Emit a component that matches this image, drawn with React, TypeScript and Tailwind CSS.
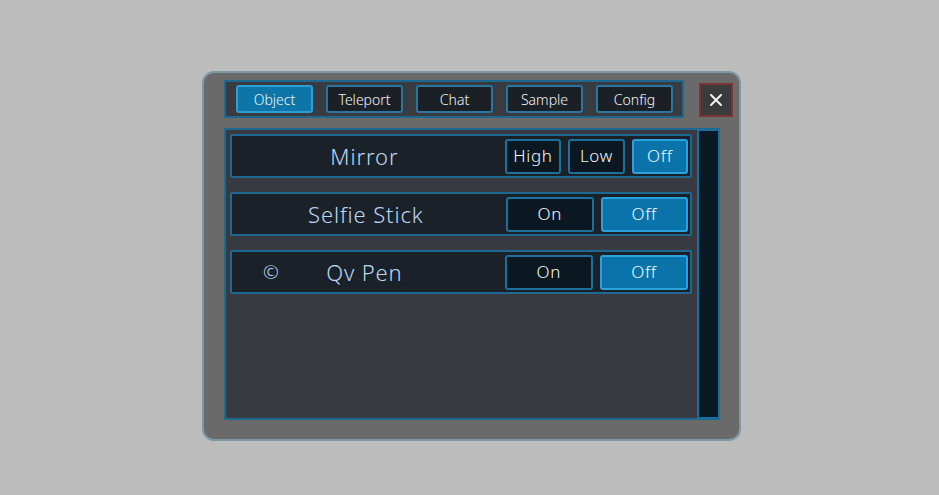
const tabs = ["Object", "Teleport", "Chat", "Sample", "Config"];

type Row = {
  label: string;
  icon?: string;
  options: string[];
  active: string;
};

const rows: Row[] = [
  { label: "Mirror", options: ["High", "Low", "Off"], active: "Off" },
  { label: "Selfie Stick", options: ["On", "Off"], active: "Off" },
  { label: "Qv Pen", icon: "©", options: ["On", "Off"], active: "Off" },
];

const font = { fontFamily: '"Noto Sans", "Open Sans", sans-serif' };

const ToggleRow = ({ row }: { row: Row }) => (
  <div className="flex h-[44px] items-center rounded-[2px] border-2 border-[#1f6891] bg-[#1b2129] pr-[2px] pl-[2px]">
    <div className="grid w-[262px] grid-cols-[74px_1fr_74px] items-center">
      <span className="text-center text-[19px] font-light text-[#bcd8f5]">{row.icon ?? ""}</span>
      <span className="text-center text-[22px] leading-none font-light tracking-[0.04em] whitespace-nowrap text-[#bcd8f5]">
        {row.label}
      </span>
      <span />
    </div>
    <div className="ml-[10px] flex w-[184px] gap-[7px]">
      {row.options.map((opt) => (
        <button
          key={opt}
          className={`flex h-[35px] flex-1 items-center justify-center rounded-[3px] border-2 text-[17px] font-light tracking-[0.04em] text-[#f6f9fb] ${
            opt === row.active
              ? "border-[#2ba2dc] bg-[#0a74aa]"
              : "border-[#1d6f9c] bg-[#0b1821]"
          }`}
        >
          {opt}
        </button>
      ))}
    </div>
  </div>
);

const App = () => {
  return (
    <div className="h-[495px] w-[939px] bg-[#bcbcbc] pt-[71px] pl-[202px]" style={font}>
      <div className="flex h-[370px] w-[539px] flex-col rounded-[12px] border-2 border-[#7b9aa2] bg-[#6a6a6a] pt-[7px] pr-[6px] pb-[19px] pl-[20px]">
        {/* Tabs */}
        <div className="flex items-center">
          <div className="flex h-[38px] w-[460px] items-center gap-[13px] border-2 border-[#1e6890] bg-[#383b40] pl-[10px]">
            {tabs.map((tab, i) => (
              <button
                key={tab}
                className={`flex h-[28px] w-[77px] items-center justify-center rounded-[3px] border-2 text-[14px] font-light text-[#f2f6f8] ${
                  i === 0
                    ? "border-[#2d9fd6] bg-[#0e75a8]"
                    : "border-[#2a76a0] bg-[#1b2027]"
                }`}
              >
                {tab}
              </button>
            ))}
          </div>
          <button className="mt-[2px] ml-[15px] flex h-[34px] w-[34px] items-center justify-center border-2 border-[#7a3535] bg-[#3a3a3a]">
            <svg width="16" height="16" viewBox="0 0 16 16" stroke="#f4f4f4" strokeWidth="2" strokeLinecap="round">
              <path d="M3 3 L13 13 M13 3 L3 13" />
            </svg>
          </button>
        </div>

        {/* Content */}
        <div className="mt-[10px] flex h-[292px] w-[496px] border-2 border-[#1d6990] bg-[#373a40]">
          <div className="flex flex-1 flex-col gap-[14px] pt-[4px] pl-[4px]">
            {rows.map((row) => (
              <div key={row.label} className="w-[462px]">
                <ToggleRow row={row} />
              </div>
            ))}
          </div>
          <div className="-my-[1px] -mr-[2px] w-[23px] border-2 border-[#1a6f9f] bg-[#0a1a24]" />
        </div>
      </div>
    </div>
  );
};

export default App;
